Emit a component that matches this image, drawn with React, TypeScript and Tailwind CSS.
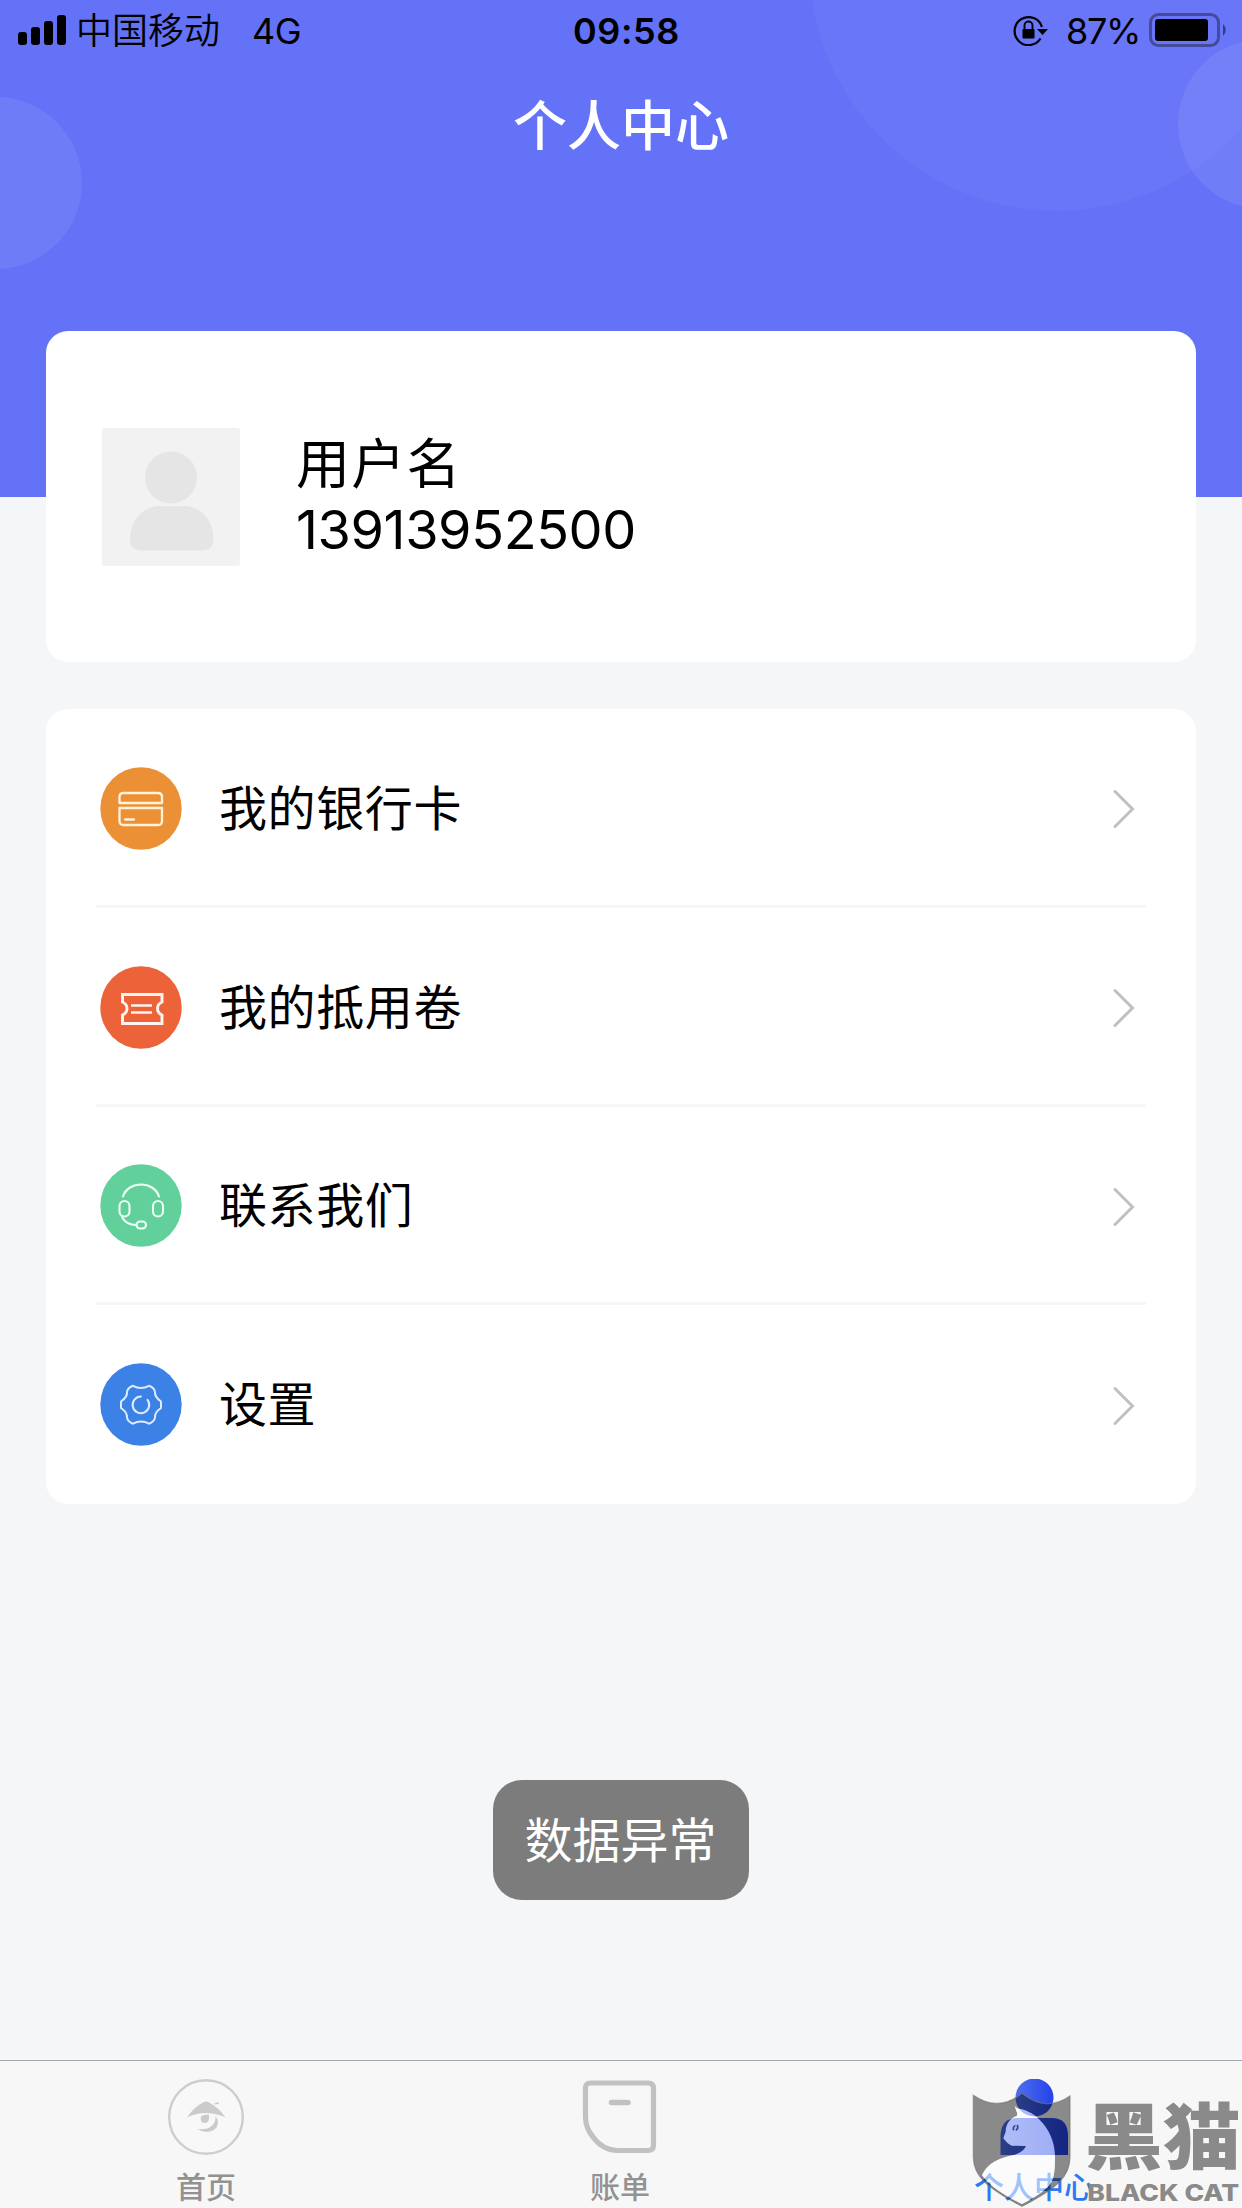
import React from "react";

const stroke = { fill: "none", strokeLinecap: "round", strokeLinejoin: "round" } as const;

function StatusBar() {
  return (
    <div className="relative flex h-[60px] items-start justify-between text-[36px] leading-[62px] text-black">
      <div className="flex items-start pl-[18px]">
        <svg className="mt-[15px] h-[30px] w-[48px]" viewBox="0 0 48 30">
          <rect x="0" y="17" width="9" height="13" rx="3" />
          <rect x="13" y="12" width="9" height="18" rx="3" />
          <rect x="26" y="6" width="9" height="24" rx="3" />
          <rect x="39" y="0" width="9" height="30" rx="3" />
        </svg>
        <span className="ml-[10px] font-[350] leading-[63px]">中国移动</span>
        <span className="ml-[32px] tracking-[-0.4px]">4G</span>
      </div>
      <span className="absolute left-[573px] top-0 font-semibold tracking-[0.6px]">09:58</span>
      <div className="flex items-start pr-[14px]">
        <svg className="mt-[14px] h-[32px] w-[36px]" viewBox="0 0 36 32">
          <path d="M27.500 24.500 A14 14 0 1 1 29 13" fill="none" stroke="#000" strokeWidth="2.200" />
          <path d="M24 15 H35 L29.500 21 Z" />
          <rect x="9.500" y="15" width="12" height="9.500" rx="1" />
          <path d="M11.500 16 V11.500 A4 4 0 0 1 19.500 11.500 V16" fill="none" stroke="#000" strokeWidth="1.900" />
        </svg>
        <span className="ml-[17px] w-[74px] whitespace-nowrap tracking-[-1.3px]">87%</span>
        <svg className="ml-[9px] mt-[13px] h-[34px] w-[79px]" viewBox="0 0 79 34">
          <rect x="1.500" y="1.500" width="68" height="31" rx="8" fill="none" stroke="#444b9c" strokeWidth="3" />
          <rect x="6" y="6" width="53" height="22" rx="3" />
          <path d="M74 11 A8 8 0 0 1 74 23 Z" fill="#343b84" />
        </svg>
      </div>
    </div>
  );
}

function BankIcon() {
  return (
    <g {...stroke} stroke="#fff2dc" strokeWidth="2.300">
      <path d="M19.500 36 V30 Q19.500 26 23.500 26 H58 Q62 26 62 30 V36 Z" />
      <path d="M19.500 41 H62 V54 Q62 58 58 58 H23.500 Q19.500 58 19.500 54 Z" />
      <path d="M25 52.500 H34" />
    </g>
  );
}

function CouponIcon() {
  return (
    <g {...stroke} strokeLinejoin="miter" strokeLinecap="butt" stroke="#fff4ee" strokeWidth="2.900">
      <path d="M22.500 28.500 H62 V36 Q57.500 38 57.500 42.500 Q57.500 47 62 49 V57.500 H22.500 V49 Q27 47 27 42.500 Q27 38 22.500 36 Z" />
      <path d="M31 39.500 H52 M31 46.500 H52" strokeWidth="2.500" />
    </g>
  );
}

function HeadsetIcon() {
  return (
    <g {...stroke} stroke="#edfff5" strokeWidth="2.100">
      <path d="M23 32.500 C28 16.500 54 16.500 59 32.500" />
      <rect x="19.500" y="37" width="10" height="15.500" rx="5" />
      <rect x="53" y="37" width="10" height="15.500" rx="5" />
      <path d="M22 53 Q26 61 36.500 61" />
      <rect x="36.500" y="57.500" width="9.500" height="7" rx="3.500" />
    </g>
  );
}

function GearIcon() {
  return (
    <g {...stroke} stroke="#dcebff" strokeWidth="2">
      <path d="M33 22.800 Q41 27 49 22.800 Q54.500 25 55 29 Q54.500 34 61 38.500 V45 Q54.500 49.500 55 54.500 Q54.500 58.500 49 60.700 Q41 56.500 33 60.700 Q27.500 58.500 27 54.500 Q27.500 49.500 21 45 V38.500 Q27.500 34 27 29 Q27.500 25 33 22.800 Z" />
      <path d="M47.500 36.800 A8.300 8.300 0 1 1 41 33.600" />
    </g>
  );
}

const rows = [
  { label: "我的银行卡", color: "#ec9035", icon: <BankIcon /> },
  { label: "我的抵用卷", color: "#ec6339", icon: <CouponIcon /> },
  { label: "联系我们", color: "#61d09a", icon: <HeadsetIcon /> },
  { label: "设置", color: "#3c82e6", icon: <GearIcon /> },
];

function MenuCard() {
  return (
    <div className="mx-[46px] mt-[47px] grid h-[795px] grid-rows-4 rounded-[22px] bg-white px-[50px]">
      {rows.map((r, i) => (
        <div
          key={r.label}
          className={"flex items-center pl-[4px] pr-[11px] pt-[3px] " + (i < 3 ? "border-b-[3px] border-[#f5f6f8]" : "pb-[3px]")}
        >
          <svg className="h-[83px] w-[82px]" viewBox="0 0 82 83">
            <ellipse cx="41" cy="41.500" rx="40.700" ry="41.300" fill={r.color} />
            {r.icon}
          </svg>
          <span className="ml-[37px] mt-px flex-1 text-[48px] leading-[60px] tracking-[0.6px] text-black">{r.label}</span>
          <svg className="mt-[2px] h-[40px] w-[23px]" viewBox="0 0 23 40">
            <path d="M3 2.500 L20.500 20 L3 37.500" fill="none" stroke="#c0c0c0" strokeWidth="3" strokeLinecap="round" />
          </svg>
        </div>
      ))}
    </div>
  );
}

function ProfileCard() {
  return (
    <div className="mx-[46px] mt-[181px] flex h-[331px] items-center rounded-[22px] bg-white pl-[56px]">
      <svg className="h-[138px] w-[138px]" viewBox="0 0 138 138">
        <rect width="138" height="138" rx="3" fill="#f2f2f2" />
        <circle cx="69" cy="49.500" r="26" fill="#e5e5e5" />
        <path d="M58 78 H82 C98 78 111 91 111.500 111 Q111.500 122.500 99 122.500 H40 Q28 122.500 28 111 C28.500 91 42 78 58 78 Z" fill="#e5e5e5" />
      </svg>
      <div className="ml-[56px] flex flex-col text-[54px] leading-[65px] text-black">
        <span className="tracking-[1.300px]">用户名</span>
        <span className="tracking-[-0.4px]">13913952500</span>
      </div>
    </div>
  );
}

function HomeIcon() {
  return (
    <svg className="h-[76px] w-[76px]" viewBox="0 0 76 76">
      <circle cx="38" cy="38" r="36.800" fill="#f8f8f8" stroke="#cdcdcd" strokeWidth="2.400" />
      <path d="M19 38.500 Q26 28 35 23.500 Q38 21.500 41 23.500 Q50 28 57.500 38.500 Q48 34 38 34 Q28 34 19 38.500 Z" fill="#cbcbcb" />
      <path d="M47 25 Q49 23.500 51 24.500" stroke="#cdcdcd" strokeWidth="1.600" fill="none" />
      <path d="M33 37.500 Q36 35 41 35.500 Q42 44.500 36 44 Q32 43 33 37.500 Z" fill="#cbcbcb" />
      <path d="M47.500 37 Q53 45 46.500 50.500 Q39 55.500 29 50 Q39 51.500 44 46.500 Q48 43 47.500 37 Z" fill="#cbcbcb" />
    </svg>
  );
}

function BillIcon() {
  return (
    <svg className="h-[76px] w-[76px]" viewBox="0 0 76 76">
      <path d="M8.500 4 H66 Q71.500 4 71.500 9 V66 Q71.500 71.500 66 71.500 H36 Q21 71.500 11 58 Q3.500 49 3.500 38 V9 Q3.500 4 8.500 4 Z" fill="none" stroke="#c1c1c1" strokeWidth="5.200" />
      <path d="M29.500 23.500 H46" stroke="#c1c1c1" strokeWidth="5.500" strokeLinecap="round" />
    </svg>
  );
}

function MeIcon() {
  return (
    <svg className="h-[76px] w-[76px]" viewBox="0 0 76 76">
      <defs>
        <linearGradient id="me" x1="0" x2="1" y1="0" y2="0">
          <stop offset="0" stopColor="#4f6fee" />
          <stop offset="1" stopColor="#2443ea" />
        </linearGradient>
      </defs>
      <path d="M4.500 76 V57 Q5 39 21 39 H56 Q72 39 72 57 V76 Z" fill="url(#me)" />
      <circle cx="38.500" cy="18.500" r="19" fill="url(#me)" />
    </svg>
  );
}

function TabBar() {
  const tabs = [
    { label: "首页", icon: <HomeIcon />, cls: "text-[#929292]" },
    { label: "账单", icon: <BillIcon />, cls: "text-[#929292]" },
    { label: "个人中心", icon: <MeIcon />, cls: "text-[#2d78f4]" },
  ];
  return (
    <div className="relative mt-auto grid h-[148px] grid-cols-3 border-t border-[#a9a9ac] bg-[#f7f7f7]">
      {tabs.map((t) => (
        <div key={t.label} className="flex flex-col items-center pr-[2px] pt-[18px]">
          {t.icon}
          <span className={"mt-[15px] text-[30px] font-medium leading-[34px] " + t.cls}>{t.label}</span>
        </div>
      ))}
      <Watermark />
    </div>
  );
}

const CAT =
  "M164 138 Q172 148 186 148 C238 162 285 220 285 290 C285 345 280 365 262 382 Q235 408 186 432 Q100 392 66 346 C80 310 120 292 165 284 Q190 276 198 258 L155 257 Q140 250 130 235 L137 215 C138 192 150 174 170 168 Q174 160 170 155 Z";

function Watermark() {
  return (
    <div className="absolute -top-px right-0 h-[148px] w-[282px] overflow-hidden">
      <svg className="h-full w-full" viewBox="0 0 846 444">
        <path
          fillRule="evenodd"
          d={"M40 106 Q115 158 186 100 Q257 158 330 108 V290 C330 350 290 385 186 440 C85 385 40 350 40 290 Z " + CAT}
          fill="#000"
          fillOpacity="0.44"
        />
        <path d={CAT} fill="#fff" fillOpacity="0.55" />
        <path d="M40 106 Q115 158 186 100 Q257 158 330 108 V290 C330 350 290 385 186 438 C85 385 40 350 40 290 Z" fill="none" stroke="#777" strokeOpacity="0.6" strokeWidth="4" />
        <path d="M166 196 Q156 203 162 211 M171 195 Q177 203 168 211" fill="none" stroke="#35449f" strokeWidth="5" />
        <text x="374" y="309" fontSize="214" fontWeight="900" fill="#8b8a8a" textLength="468" lengthAdjust="spacingAndGlyphs">黑猫</text>
        <text x="382" y="422" fontSize="68" fontWeight="800" fill="#8b8a8a" textLength="456" lengthAdjust="spacingAndGlyphs">BLACK CAT</text>
      </svg>
    </div>
  );
}

export default function App() {
  return (
    <div className="relative flex h-[2208px] w-[1242px] flex-col overflow-hidden bg-[#f5f6f8] font-['Inter','Noto_Sans_CJK_SC',sans-serif]">
      <svg className="absolute left-0 top-0 h-[497px] w-[1242px]" viewBox="0 0 1242 497">
        <rect width="1242" height="497" fill="#6372f7" />
        <circle cx="-4" cy="183" r="86" fill="#fff" fillOpacity="0.075" />
        <circle cx="1057" cy="-37" r="248" fill="#fff" fillOpacity="0.035" />
        <circle cx="1263" cy="124" r="85" fill="#fff" fillOpacity="0.08" />
      </svg>
      <div className="relative flex flex-1 flex-col">
        <StatusBar />
        <h1 className="h-[90px] text-center text-[54px] font-medium leading-[133px] text-white">个人中心</h1>
        <ProfileCard />
        <MenuCard />
        <TabBar />
      </div>
      <div className="absolute left-[493px] top-[1780px] flex h-[120px] w-[256px] items-center justify-center rounded-[29px] bg-[#7b7c7b] pr-px pt-px text-[48px] text-white">
        数据异常
      </div>
    </div>
  );
}
